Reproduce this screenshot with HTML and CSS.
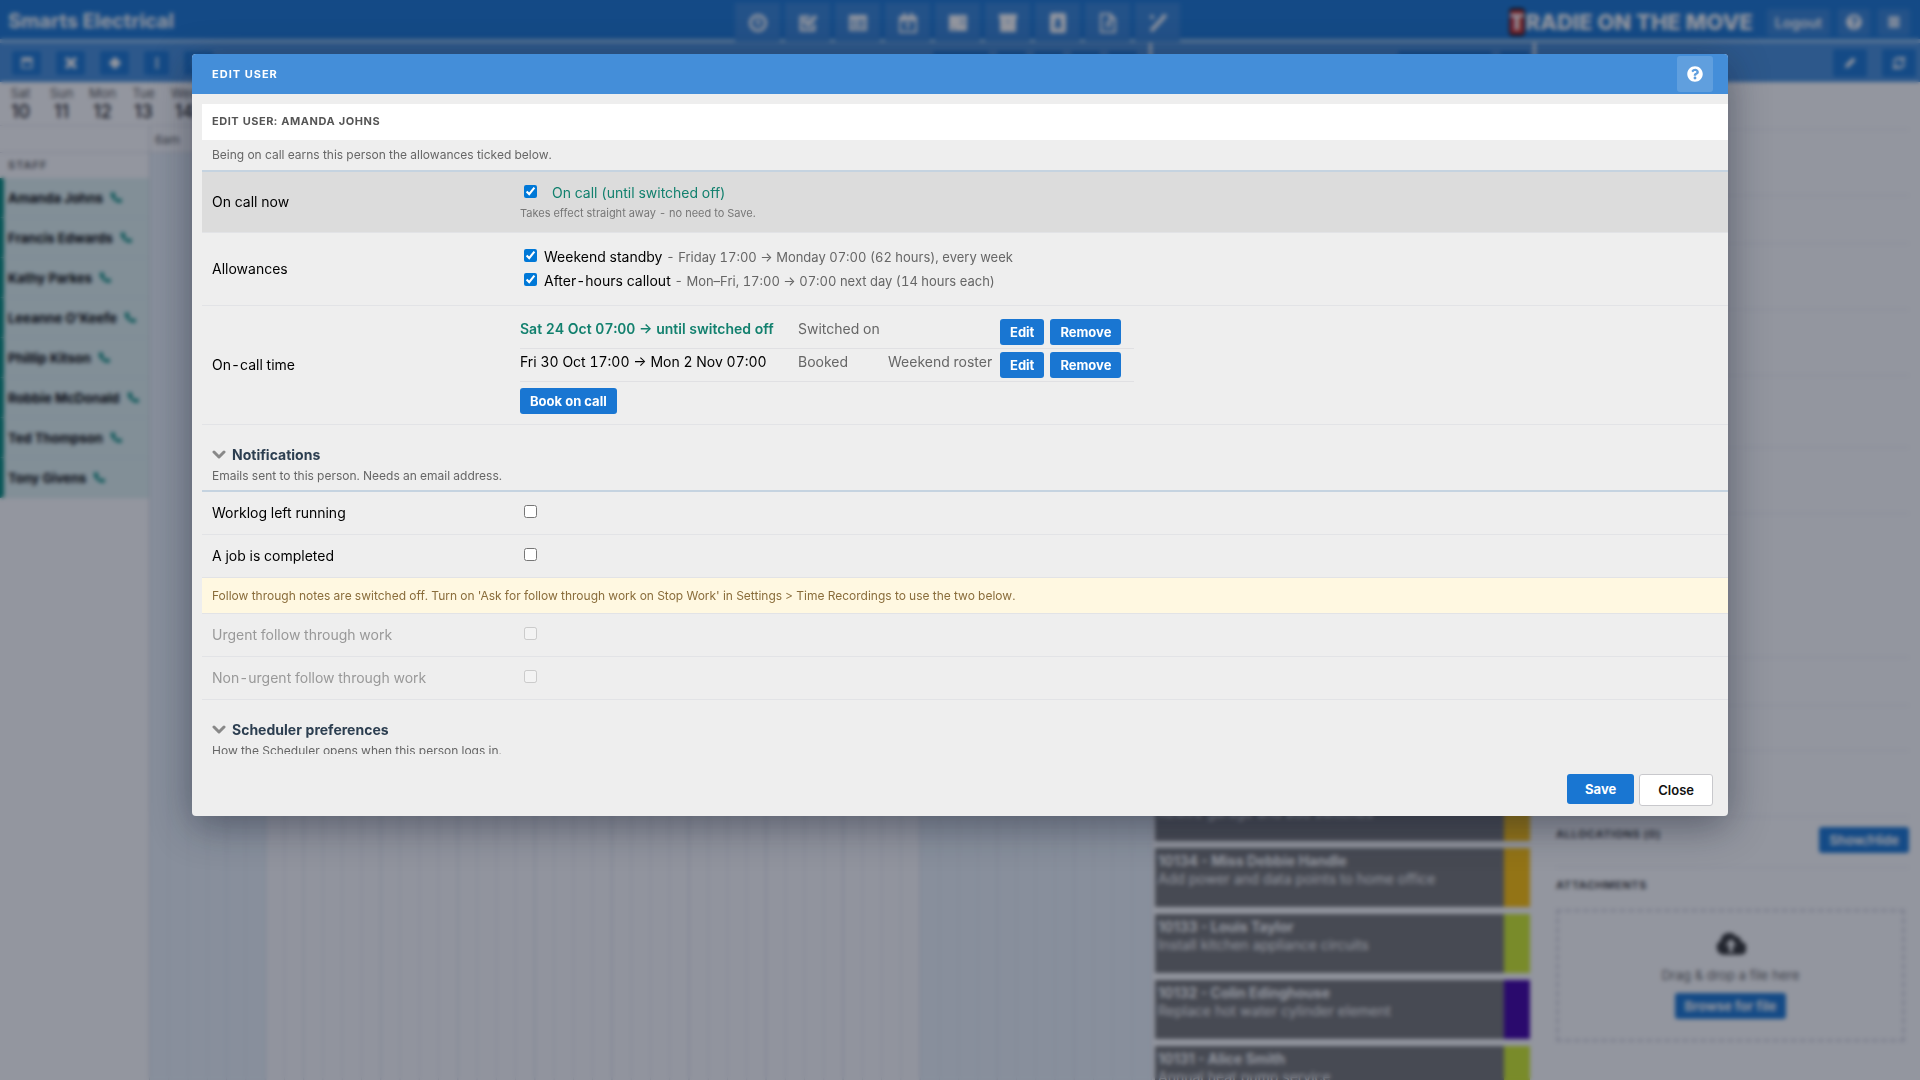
FILE: index.html
```html
<!DOCTYPE html>
<html lang="en">
<head>
<meta charset="utf-8">
<title>Edit user</title>
<link rel="stylesheet" href="styles.css">
</head>
<body>
<svg class="sprite" aria-hidden="true">
  <symbol id="i-help" viewBox="0 0 512 512"><path fill-rule="evenodd" d="M504 256c0 136.997-111.043 248-248 248S8 392.997 8 256C8 119.083 119.043 8 256 8s248 111.083 248 248zM262.655 90c-54.497 0-89.255 22.957-116.549 63.758-3.536 5.286-2.353 12.415 2.715 16.258l34.699 26.31c5.205 3.947 12.621 3.008 16.665-2.122 17.864-22.658 30.113-35.797 57.303-35.797 20.429 0 45.698 13.148 45.698 32.958 0 14.976-12.363 22.667-32.534 33.976C247.128 238.528 216 254.941 216 296v4c0 6.627 5.373 12 12 12h56c6.627 0 12-5.373 12-12v-1.333c0-28.462 83.186-29.647 83.186-106.667 0-58.002-60.165-102-116.531-102zM256 338c-25.365 0-46 20.635-46 46 0 25.364 20.635 46 46 46s46-20.636 46-46c0-25.364-20.635-46-46-46z"/></symbol>
  <symbol id="i-clock" viewBox="0 0 20 20"><path fill="none" stroke="currentColor" stroke-width="3" d="M10 2.500a7.500 7.500 0 1 0 .01 0zM10 6v4.500l2 1"/></symbol>
  <symbol id="i-check" viewBox="0 0 20 20"><path fill="none" stroke="currentColor" stroke-width="3" d="M16 11v6H3V4h9"/><path fill="none" stroke="currentColor" stroke-width="4" d="M6 7l4 5 8-9"/></symbol>
  <symbol id="i-table" viewBox="0 0 20 20"><path fill-rule="evenodd" d="M1 2h18v16H1zM3 7v2h4V7zM9 7v2h8V7zM3 11v2h4v-2zM9 11v2h8v-2zM3 15v1h14v-1z"/></symbol>
  <symbol id="i-cal" viewBox="0 0 20 20"><path fill-rule="evenodd" d="M1 3h4V0h3v3h4V0h3v3h4v17H1zM3 8v10h14V8z"/><path d="M7 10h6l-3 6H8l2-4H7z"/></symbol>
  <symbol id="i-list" viewBox="0 0 20 20"><path fill-rule="evenodd" d="M1 2h18v16H1zM12 6v1h5V6zM12 10v1h5v-1zM4 15h3v1H4z"/></symbol>
  <symbol id="i-box" viewBox="0 0 20 20"><path fill-rule="evenodd" d="M1 1h18v4l-1 1v13H2V6L1 5zM8 8v1h4V8z"/></symbol>
  <symbol id="i-contact" viewBox="0 0 20 20"><path fill-rule="evenodd" d="M3 0h14l1 2v16l-1 2H3l-1-2V2zM10 5a3 3 0 0 0-2 5l-2 5h8l-2-5a3 3 0 0 0-2-5z"/></symbol>
  <symbol id="i-file" viewBox="0 0 20 20"><path fill="none" stroke="currentColor" stroke-width="2" d="M3 1h9l5 5v13H3zM12 1v5h5M7 13h5M8 10l4-2v6"/></symbol>
  <symbol id="i-wand" viewBox="0 0 20 20"><path fill="none" stroke="currentColor" stroke-width="4" d="M3 18L16 4"/><path fill="none" stroke="currentColor" stroke-width="2" d="M4 2v4M2 4h4M16 1v4M14 3h5"/></symbol>
  <symbol id="i-pencil" viewBox="0 0 20 20"><path d="M3 17l1-5L14 2l4 4L8 16z"/></symbol>
  <symbol id="i-refresh" viewBox="0 0 20 20"><path fill="none" stroke="currentColor" stroke-width="3" d="M3 10a7 7 0 0 1 12-5M17 1v5h-5M17 10a7 7 0 0 1-12 5M3 19v-5h5"/></symbol>
  <symbol id="i-menu" viewBox="0 0 20 20"><path d="M3 3h14v4H3zM3 8h14v4H3zM3 13h14v4H3z"/></symbol>
  <symbol id="i-day" viewBox="0 0 20 20"><path fill-rule="evenodd" d="M2 2h16v16H2zM4 8v8h12V8z"/></symbol>
  <symbol id="i-expand" viewBox="0 0 20 20"><path fill="none" stroke="currentColor" stroke-width="5" d="M3 3l14 14M17 3L3 17"/></symbol>
  <symbol id="i-move" viewBox="0 0 20 20"><path d="M10 1l9 9-9 9-9-9z"/></symbol>
  <symbol id="i-dots" viewBox="0 0 20 20"><path d="M8 2h4v4H8zM8 8h4v4H8zM8 14h4v4H8z"/></symbol>
  <symbol id="i-phone" viewBox="0 0 20 20"><path d="M1 4l4-3 4 5-2 3q2 3 4 4l3-2 5 3-2 4C9 19 1 11 1 4z"/></symbol>
  <symbol id="i-cloud" viewBox="0 0 32 24"><path fill-rule="evenodd" d="M8 24a8 8 0 0 1-3-15A9 9 0 0 1 21 4a6 6 0 0 1 6 6 7 7 0 0 1-2 14zM16 7l-6 7h4v7h4v-7h4z"/></symbol>
  <symbol id="i-chevron" viewBox="0 0 14 10"><path fill="none" stroke="currentColor" stroke-width="3" stroke-linecap="round" stroke-linejoin="round" d="M2 2l5 5 5-5"/></symbol>
</svg>

<div class="app">
  <header class="topbar">
    <div class="company">Smarts Electrical</div>
    <nav class="topnav" aria-label="Main">
      <button class="tab"><svg><use href="#i-clock"/></svg></button>
      <button class="tab"><svg><use href="#i-check"/></svg></button>
      <button class="tab"><svg><use href="#i-table"/></svg></button>
      <button class="tab"><svg><use href="#i-cal"/></svg></button>
      <button class="tab"><svg><use href="#i-list"/></svg></button>
      <button class="tab"><svg><use href="#i-box"/></svg></button>
      <button class="tab"><svg><use href="#i-contact"/></svg></button>
      <button class="tab"><svg><use href="#i-file"/></svg></button>
      <button class="tab"><svg><use href="#i-wand"/></svg></button>
    </nav>
    <div class="account">
      <div class="brand"><span class="brand-t">T</span>RADIE ON THE MOVE</div>
      <button class="ghost">Logout</button>
      <button class="ghost"><svg><use href="#i-help"/></svg></button>
      <button class="ghost"><svg><use href="#i-menu"/></svg></button>
    </div>
  </header>

  <div class="workspace">
    <section class="panel">
      <div class="toolbar divided">
        <div class="tools">
          <button class="tool"><svg><use href="#i-day"/></svg></button>
          <button class="tool"><svg><use href="#i-expand"/></svg></button>
          <button class="tool"><svg><use href="#i-move"/></svg></button>
          <button class="tool slim"><svg><use href="#i-dots"/></svg></button>
          <button class="tool"><svg><use href="#i-menu"/></svg></button>
        </div>
        <div class="tools tight">
          <button class="tool mid"></button>
          <button class="tool"></button>
          <button class="tool"></button>
          <button class="tool"></button>
          <button class="tool"></button>
        </div>
      </div>
      <div class="days">
        <div class="day">Sat<b>10</b></div>
        <div class="day">Sun<b>11</b></div>
        <div class="day">Mon<b>12</b></div>
        <div class="day">Tue<b>13</b></div>
        <div class="day">Wed<b>14</b></div>
      </div>
      <div class="schedule">
        <div class="staff">
          <div class="staff-blank"></div>
          <div class="staff-head">STAFF</div>
          <div class="person">Amanda Johns<svg><use href="#i-phone"/></svg></div>
          <div class="person">Francis Edwards<svg><use href="#i-phone"/></svg></div>
          <div class="person">Kathy Parkes<svg><use href="#i-phone"/></svg></div>
          <div class="person">Leeanne O'Keefe<svg><use href="#i-phone"/></svg></div>
          <div class="person">Phillip Kitson<svg><use href="#i-phone"/></svg></div>
          <div class="person">Robbie McDonald<svg><use href="#i-phone"/></svg></div>
          <div class="person">Ted Thompson<svg><use href="#i-phone"/></svg></div>
          <div class="person">Tony Givens<svg><use href="#i-phone"/></svg></div>
        </div>
        <div class="timeline">
          <div class="hours">6am</div>
          <div class="lanes"></div>
        </div>
      </div>
    </section>

    <section class="panel">
      <div class="toolbar divided end">
        <div class="tools tight">
          <button class="tool wide"></button>
          <button class="tool"></button>
        </div>
      </div>
      <div class="jobs">
        <article class="job amber"><b>10135</b><span>Rewire garage and add switches</span></article>
        <article class="job amber"><b>10134 - Miss Debbie Handle</b><span>Add power and data points to home office</span></article>
        <article class="job lime"><b>10133 - Louis Taylor</b><span>Install kitchen appliance circuits</span></article>
        <article class="job violet"><b>10132 - Colin Edinghouse</b><span>Replace hot water cylinder element</span></article>
        <article class="job lime"><b>10131 - Alice Smith</b><span>Annual heat pump service</span></article>
      </div>
    </section>

    <section class="panel">
      <div class="toolbar end">
        <div class="tools">
          <button class="tool big"><svg><use href="#i-pencil"/></svg></button>
          <button class="tool big"><svg><use href="#i-refresh"/></svg></button>
        </div>
      </div>
      <div class="details">
        <div class="line h48"></div>
        <div class="line h66"></div>
        <div class="line h48"></div>
        <div class="line h66"></div>
        <div class="line h66"></div>
        <div class="line h72"></div>
        <div class="line h66"></div>
        <div class="line h144"></div>
        <div class="line h48"></div>
        <div class="line h44"></div>
        <div class="line h66"></div>
        <div class="line allocations"><h3>ALLOCATIONS (0)</h3><button class="btn">Show/Hide</button></div>
        <h3 class="attach-head">ATTACHMENTS</h3>
        <div class="drop">
          <svg><use href="#i-cloud"/></svg>
          <p>Drag &amp; drop a file here</p>
          <button class="btn">Browse for file</button>
        </div>
      </div>
    </section>
  </div>
</div>

<div class="backdrop">
  <div class="modal" role="dialog" aria-labelledby="modal-title">
    <div class="modal-head">
      <h1 id="modal-title">EDIT USER</h1>
      <button class="help" aria-label="Help"><svg><use href="#i-help"/></svg></button>
    </div>
    <form class="modal-body">
      <h2 class="user-title">EDIT USER: AMANDA JOHNS</h2>
      <p class="intro">Being on call earns this person the allowances ticked below.</p>

      <div class="field active">
        <span class="label">On call now</span>
        <div class="value">
          <div class="check-line"><input type="checkbox" id="oncall" checked><label class="state" for="oncall">On call (until switched off)</label></div>
          <p class="hint">Takes effect straight away - no need to Save.</p>
        </div>
      </div>

      <div class="field">
        <span class="label">Allowances</span>
        <div class="value allowances">
          <div class="check-line"><input type="checkbox" id="standby" checked><label for="standby">Weekend standby <small>- Friday 17:00 → Monday 07:00 (62 hours), every week</small></label></div>
          <div class="check-line"><input type="checkbox" id="callout" checked><label for="callout">After-hours callout <small>- Mon–Fri, 17:00 → 07:00 next day (14 hours each)</small></label></div>
        </div>
      </div>

      <div class="field">
        <span class="label">On-call time</span>
        <div class="value times">
          <table class="slots">
            <tr>
              <td class="when current">Sat 24 Oct 07:00 → until switched off</td>
              <td class="kind">Switched on</td>
              <td class="source"></td>
              <td class="actions"><div class="action-row"><button type="button" class="btn">Edit</button><button type="button" class="btn">Remove</button></div></td>
            </tr>
            <tr>
              <td class="when">Fri 30 Oct 17:00 → Mon 2 Nov 07:00</td>
              <td class="kind">Booked</td>
              <td class="source">Weekend roster</td>
              <td class="actions"><div class="action-row"><button type="button" class="btn">Edit</button><button type="button" class="btn">Remove</button></div></td>
            </tr>
          </table>
          <button type="button" class="btn">Book on call</button>
        </div>
      </div>

      <div class="section">
        <h3><svg><use href="#i-chevron"/></svg>Notifications</h3>
        <p>Emails sent to this person. Needs an email address.</p>
      </div>
      <div class="field short"><label class="label" for="worklog">Worklog left running</label><div class="value"><input type="checkbox" id="worklog"></div></div>
      <div class="field short"><label class="label" for="completed">A job is completed</label><div class="value"><input type="checkbox" id="completed"></div></div>
      <p class="notice">Follow through notes are switched off. Turn on 'Ask for follow through work on Stop Work' in Settings &gt; Time Recordings to use the two below.</p>
      <div class="field short off"><label class="label" for="urgent">Urgent follow through work</label><div class="value"><input type="checkbox" id="urgent" disabled></div></div>
      <div class="field short off"><label class="label" for="nonurgent">Non-urgent follow through work</label><div class="value"><input type="checkbox" id="nonurgent" disabled></div></div>

      <div class="section">
        <h3><svg><use href="#i-chevron"/></svg>Scheduler preferences</h3>
        <p>How the Scheduler opens when this person logs in.</p>
      </div>
    </form>
    <div class="modal-foot">
      <button class="btn save">Save</button>
      <button class="btn close">Close</button>
    </div>
  </div>
</div>
</body>
</html>
```

FILE: styles.css
```css
* { box-sizing: border-box; }
body {
  margin: 0;
  height: 100vh;
  overflow: hidden;
  font-family: Inter, "Liberation Sans", sans-serif;
  font-size: 14px;
  line-height: 20px;
  color: #000;
}
h1, h2, h3, p { margin: 0; }
button { font-family: inherit; border: 0; padding: 0; cursor: pointer; }
svg { display: block; fill: currentColor; }
.sprite { display: none; }

.btn {
  height: 26px;
  padding: 0 10px;
  border-radius: 3px;
  background: #1976d2;
  color: #fff;
  font-size: 13px;
  font-weight: 700;
  line-height: 26px;
}

/* Scheduler behind the dialog */
.app { height: 100vh; display: flex; flex-direction: column; overflow: hidden; background: #fff; }
.topbar {
  display: grid;
  grid-template-columns: 1fr auto 1fr;
  height: 43px;
  flex: none;
  padding-right: 5px;
  background: #1976d2;
  border-bottom: 4px solid #8fbde9;
  color: #fff;
}
.company { padding: 10px 8px; font-size: 20px; font-weight: 700; line-height: 22px; }
.topnav { display: flex; gap: 5px; padding-top: 3px; }
.tab { width: 45px; display: grid; place-items: center; background: #3483d6; color: #fff; }
.tab svg { width: 20px; height: 20px; }
.account { display: flex; justify-content: flex-end; align-items: center; gap: 8px; padding: 2px 5px 0 0; }
.brand { display: flex; align-items: center; margin-right: 6px; font-size: 22px; font-weight: 800; line-height: 24px; white-space: nowrap; }
.brand-t { border: 2px solid #000; border-width: 2px 1px; border-radius: 4px; background: #c33; }
.ghost { height: 27px; min-width: 30px; padding: 0 8px; display: grid; place-items: center; background: #3483d6; color: #fff; font-size: 14px; font-weight: 600; border-radius: 3px; }
.ghost svg { width: 16px; height: 16px; }

.workspace { flex: 1; min-height: 0; display: grid; grid-template-columns: 3fr 1fr 1fr; }
.panel { min-width: 0; min-height: 0; display: flex; flex-direction: column; }
.toolbar { height: 39px; flex: none; display: flex; justify-content: space-between; align-items: center; padding: 0 12px; background: #468fdb; }
.toolbar.divided { border-right: 3px solid #e8f1fa; }
.toolbar.end { justify-content: flex-end; padding: 0 4px; }
.tools { display: flex; gap: 15px; }
.tools.tight { gap: 8px; }
.tool { width: 29px; height: 24px; display: grid; place-items: center; background: #1976d2; color: #fff; border-radius: 2px; }
.tool.slim { width: 25px; }
.tool.mid { width: 56px; }
.tool.wide { width: 94px; }
.tool.big { width: 34px; height: 28px; }
.tool svg { width: 14px; height: 14px; }

.days { height: 44px; flex: none; display: flex; border-bottom: 1px solid #e2e2e8; color: #555; }
.day { width: 41px; padding-top: 2px; text-align: center; font-size: 13px; line-height: 18px; }
.day b { display: block; font-size: 18px; font-weight: 500; line-height: 20px; color: #222; }
.schedule { flex: 1; min-height: 0; display: flex; }
.staff { width: 149px; flex: none; }
.staff-blank { height: 27px; border-bottom: 1px solid #dcdce4; }
.staff-head { height: 25px; padding-left: 8px; font-size: 11px; font-weight: 600; line-height: 24px; letter-spacing: 1px; color: #555; }
.person { height: 40px; display: flex; align-items: center; gap: 7px; padding-left: 4px; border-left: 4px solid #00897b; border-bottom: 1px solid #d6ebea; background: #e0f2f1; font-size: 13px; font-weight: 700; }
.person svg { width: 13px; height: 13px; color: #00897b; }
.timeline { flex: 1; display: flex; flex-direction: column; border-left: 1px solid #d0d4dc; }
.hours { height: 27px; padding-left: 5px; border-bottom: 1px solid #dcdce4; font-size: 12px; line-height: 28px; color: #555; }
.lanes {
  flex: 1;
  background:
    linear-gradient(to right, transparent 99%, #dbe0ea 99%) 0 0 / calc(100% / 13) 100%,
    linear-gradient(to right, transparent 94%, #e1e4ec 94%) 0 0 / calc(100% / 52) 100%,
    linear-gradient(to right, #ebf3fa 11.7%, #fcfcfe 11.7%, #fcfcfe 76.8%, #ebf3fa 76.8%);
}

.jobs { flex: 1; min-height: 0; padding: 700px 6px 0 3px; display: flex; flex-direction: column; gap: 7px; overflow: hidden; }
.job { height: 59px; flex: none; padding: 4px 3px; background: #757575; color: #fff; line-height: 18px; border-right: 26px solid; }
.job b, .job span { display: block; }
.amber { border-color: #ffc107; }
.lime { border-color: #d0eb2a; }
.violet { border-color: #4000a5; }

.details { padding: 0 11px 0 20px; }
.details h3 { font-size: 11px; font-weight: 700; line-height: 14px; letter-spacing: .05em; color: #444; }
.line { border-bottom: 1px solid #eeeef5; }
.h44 { height: 45px; }
.h48 { height: 48px; }
.h66 { height: 66px; }
.h72 { height: 72px; }
.h144 { height: 144px; }
.allocations { height: 51px; display: flex; justify-content: space-between; align-items: flex-start; padding-top: 10px; }
.details .attach-head { padding: 10px 0 17px; }
.drop { height: 133px; margin-right: 4px; padding-top: 20px; display: flex; flex-direction: column; align-items: center; border: 3px dashed #dcdce4; font-size: 13px; color: #666; }
.drop svg { width: 30px; height: 23px; color: #333; }
.drop p { padding: 10px 0 8px; }

/* Dialog */
.backdrop {
  position: fixed;
  inset: 0;
  padding-top: 5vh;
  background: rgba(15, 23, 42, .45);
  backdrop-filter: blur(2px);
}
.modal { width: 80%; margin: 0 auto; border-radius: 4px; overflow: hidden; background: #eee; box-shadow: 0 10px 40px rgba(15, 23, 42, .45); }
.modal-head { height: 40px; display: flex; justify-content: space-between; align-items: center; padding: 0 15px 0 20px; background: #448ed9; color: #fff; }
.modal-head h1 { font-size: 11px; font-weight: 700; letter-spacing: 1px; }
.help { width: 36px; height: 36px; display: grid; place-items: center; border-radius: 3px; background: #609fde; color: #fff; }
.help svg { width: 16px; height: 16px; }
.modal-body { height: calc(100vh - 430px); margin: 10px 0 0 10px; overflow-y: auto; scrollbar-width: none; font-variant-numeric: tabular-nums; }
.user-title { height: 36px; padding: 0 10px; background: #fff; color: #555; font-size: 11px; font-weight: 700; line-height: 34px; letter-spacing: .05em; }
.intro { padding: 5px 10px; border-bottom: 2px solid #c5d3e0; color: #666; font-size: 12px; }
.field { display: grid; grid-template-columns: 308px 1fr; align-items: center; padding: 10px; border-bottom: 1px solid #e2e3e6; }
.field.active { padding: 9px 10px; background: #dcdcdc; }
.field.active .value { padding-top: 2px; }
.field.short { height: 43px; padding: 0 10px; }
.off .label { color: #999; }
.check-line { display: flex; align-items: center; }
input[type="checkbox"] { display: block; width: 13px; height: 13px; margin: 0 7px 4px 4px; accent-color: #0078d7; }
.state { padding-left: 8px; color: #12806e; }
.hint { font-size: 11px; color: #777; }
.allowances { padding: 2px 0; line-height: 24px; }
.allowances small { font-size: 13px; color: #666; }
.slots { table-layout: fixed; width: 614px; margin-bottom: 6px; border-collapse: separate; border-spacing: 0; }
.slots td { height: 33px; padding: 0; border-bottom: 1px solid #e0e0e3; vertical-align: top; line-height: 26px; white-space: nowrap; }
.when { width: 278px; }
.current { color: #12806e; font-weight: 600; }
.kind { width: 90px; color: #666; }
.source { width: 112px; color: #666; }
.action-row { display: flex; gap: 6px; padding-top: 3px; }
.section { padding: 20px 10px 4px; border-bottom: 2px solid #c5d3e0; }
.section h3 { display: flex; align-items: center; gap: 6px; margin-bottom: 1px; color: #2c3e50; font-size: 14px; font-weight: 700; line-height: 20px; }
.section svg { width: 14px; height: 10px; color: #888; }
.section p { color: #666; font-size: 12px; }
.notice { height: 36px; padding: 0 10px; border-bottom: 1px solid #e2e3e6; background: #fff8e1; color: #8a6d3b; font-size: 12px; line-height: 36px; }
.modal-foot { height: 62px; display: flex; justify-content: flex-end; align-items: flex-start; gap: 5px; padding: 20px 15px 0; }
.save { height: 30px; padding: 0 18px; line-height: 30px; }
.close { height: 32px; padding: 0 18px; border: 1px solid #c8c8cc; background: #fff; color: #111; font-weight: 600; line-height: 30px; }
```
